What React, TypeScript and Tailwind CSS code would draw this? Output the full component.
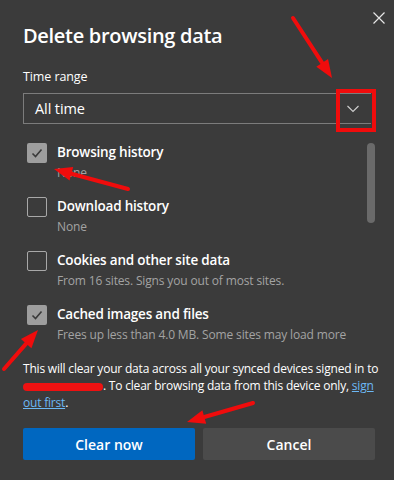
import React from 'react';

type Pt = [number, number];

function Arrow({ from, to }: { from: Pt; to: Pt }) {
    const dx = to[0] - from[0];
    const dy = to[1] - from[1];
    const len = Math.hypot(dx, dy);
    const ux = dx / len;
    const uy = dy / len;
    const headLen = 18;
    const half = 7;
    const bx = to[0] - ux * headLen;
    const by = to[1] - uy * headLen;
    const p1 = `${bx - uy * half},${by + ux * half}`;
    const p2 = `${bx + uy * half},${by - ux * half}`;
    return (
        <g>
            <line x1={from[0]} y1={from[1]} x2={bx} y2={by} stroke="#f00c0c" strokeWidth={4} strokeLinecap="round" />
            <polygon points={`${to[0]},${to[1]} ${p1} ${p2}`} fill="#f00c0c" />
        </g>
    );
}

function Checkbox({ checked }: { checked: boolean }) {
    if (checked) {
        return (
            <div className="w-5 h-5 rounded-[2px] bg-[#9e9e9e] flex items-center justify-center shrink-0">
                <svg width="14" height="14" viewBox="0 0 14 14">
                    <path d="M2.5 7.5 L5.5 10.5 L11.5 3.5" fill="none" stroke="#3a3a3a" strokeWidth="1.6" />
                </svg>
            </div>
        );
    }
    return <div className="w-5 h-5 rounded-[2px] border border-[#a8a8a8] shrink-0" />;
}

const items = [
    { label: 'Browsing history', sub: 'None', checked: true },
    { label: 'Download history', sub: 'None', checked: false },
    { label: 'Cookies and other site data', sub: 'From 16 sites. Signs you out of most sites.', checked: false },
    { label: 'Cached images and files', sub: 'Frees up less than 4.0 MB. Some sites may load more', checked: true },
];

export default function App() {
    return (
        <div
            className="relative w-[394px] h-[480px] overflow-hidden bg-[#3b3b3b] text-white"
            style={{ fontFamily: '"Open Sans", "Noto Sans", sans-serif' }}
        >
            <div className="flex flex-col pl-[23px] pr-[19px]">
                <div className="flex justify-between items-start">
                    <h1 className="mt-[23px] text-[20px] leading-[26px] font-semibold tracking-[-0.3px]">Delete browsing data</h1>
                    <svg width="12" height="12" viewBox="0 0 12 12" className="mt-[12px] -mr-[10px]">
                        <path d="M0.5 0.5 L11.5 11.5 M11.5 0.5 L0.5 11.5" stroke="#e6e6e6" strokeWidth="1.2" />
                    </svg>
                </div>

                <div className="mt-[19px] text-[12.5px] leading-[17px] tracking-[-0.1px]">Time range</div>
                <div className="mt-[8px] w-[348px] h-[31px] border border-r-0 border-[#7c7c7c] flex items-center justify-between pl-[11px] pr-[12px]">
                    <span className="text-[14.5px] tracking-[-0.1px]">All time</span>
                    <svg width="12" height="8" viewBox="0 0 12 8">
                        <path d="M0.5 1 L6 6.5 L11.5 1" fill="none" stroke="#cfcfcf" strokeWidth="1.1" />
                    </svg>
                </div>

                <div className="mt-[19px] flex">
                    <div className="flex-1 flex flex-col gap-[15px] pl-[4px]">
                        {items.map((it) => (
                            <div key={it.label} className="flex gap-[10px]">
                                <Checkbox checked={it.checked} />
                                <div className="flex flex-col">
                                    <span className="text-[13.5px] leading-[21px] font-semibold -mt-[1px] tracking-[-0.2px]">{it.label}</span>
                                    <span className="text-[12px] leading-[19px] text-[#a3a3a3] tracking-[-0.15px]">{it.sub}</span>
                                </div>
                            </div>
                        ))}
                    </div>
                    <div className="w-[8px] h-[80px] rounded-full bg-[#6a6a6a] ml-[4px]" />
                </div>

                <p className="mt-[16px] text-[12px] leading-[17px] tracking-[-0.2px] -mr-[4px]">
                    This will clear your data across all your synced devices signed in to{' '}
                    <span className="inline-block align-middle w-[80px] h-[8px] rounded-full bg-[#ee1111]" />. To clear browsing data from this device only,{' '}
                    <span className="text-[#6cb8f5] underline underline-offset-1">sign out first</span>.
                </p>

                <div className="mt-[17px] flex gap-[8px]">
                    <button className="w-[172px] h-[32px] rounded-[2px] bg-[#0067c0] text-[14px] font-semibold">Clear now</button>
                    <button className="w-[172px] h-[32px] rounded-[2px] bg-[#4b4b4b] text-[14px] font-semibold">Cancel</button>
                </div>
            </div>

            <svg className="absolute inset-0 pointer-events-none" width="394" height="480">
                <rect x="338" y="91" width="36" height="39" fill="none" stroke="#f00c0c" strokeWidth="4" />
                <Arrow from={[293, 18]} to={[332, 78]} />
                <Arrow from={[128, 189]} to={[54, 169]} />
                <Arrow from={[4, 369]} to={[38, 330]} />
                <Arrow from={[253, 403]} to={[187, 422]} />
            </svg>
        </div>
    );
}
